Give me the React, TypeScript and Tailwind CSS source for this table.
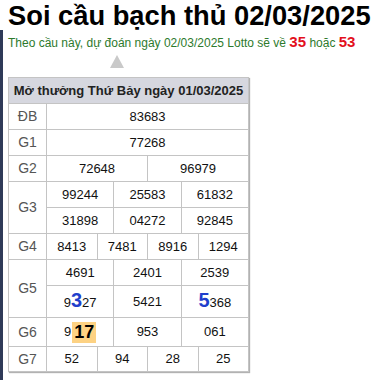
const font = { fontFamily: '"Liberation Sans", Arial, sans-serif' };

type Cell = { span: number; content: React.ReactNode };

function Row({ cells, h }: { cells: Cell[]; h: string }) {
  return (
    <>
      {cells.map((c, i) => (
        <div
          key={i}
          className={`flex items-center justify-center border-b border-r border-[#c4c4c4] text-[13px] text-[#111] ${h}`}
          style={{ gridColumn: `span ${c.span} / span ${c.span}` }}
        >
          {c.content}
        </div>
      ))}
    </>
  );
}

const n = (s: string, span: number): Cell => ({ span, content: s });

export default function App() {
  return (
    <div className="h-[380px] w-[381px] overflow-hidden bg-white" style={font}>
      <h1 className="h-[30px] whitespace-nowrap pl-[8px] pt-[2px] text-[27.3px] font-bold leading-none text-black">
        Soi cầu bạch thủ 02/03/2025
      </h1>
      <div className="flex min-h-[350px]">
        <div className="w-[3px] shrink-0 bg-[#2f3a58]" />
        <div className="pl-[5px]">
          <p className="h-[25px] whitespace-nowrap pt-[3px] text-[12px] leading-[17px] text-[#2d7a2d]">
            Theo cầu này, dự đoán ngày 02/03/2025 Lotto sẽ về{" "}
            <b className="text-[15px] text-[#e3101c]">35</b> hoặc{" "}
            <b className="text-[15px] text-[#e3101c]">53</b>
          </p>
          <div className="ml-[102px] h-0 w-0 border-x-[7px] border-b-[13px] border-x-transparent border-b-[#c9c9c9]" />
          <div className="mt-[9px] w-[241px] border-l border-t border-[#c4c4c4] shadow-[1px_1px_1px_rgba(0,0,0,0.3)]">
            <div className="flex h-[26px] items-center justify-center whitespace-nowrap border-b border-r border-[#c4c4c4] bg-[#d6d7df] text-[13px] font-bold text-[#222]">
              Mở thưởng Thứ Bảy ngày 01/03/2025
            </div>
            <div className="grid grid-cols-[38px_repeat(12,minmax(0,1fr))]">
              <Label h="h-[26px]">ĐB</Label>
              <Row h="h-[26px]" cells={[n("83683", 12)]} />
              <Label h="h-[26px]">G1</Label>
              <Row h="h-[26px]" cells={[n("77268", 12)]} />
              <Label h="h-[26px]">G2</Label>
              <Row h="h-[26px]" cells={[n("72648", 6), n("96979", 6)]} />
              <Label h="row-span-2">G3</Label>
              <Row h="h-[26px]" cells={[n("99244", 4), n("25583", 4), n("61832", 4)]} />
              <Row h="h-[26px]" cells={[n("31898", 4), n("04272", 4), n("92845", 4)]} />
              <Label h="h-[26px]">G4</Label>
              <Row h="h-[26px]" cells={[n("8413", 3), n("7481", 3), n("8916", 3), n("1294", 3)]} />
              <Label h="row-span-2">G5</Label>
              <Row h="h-[26px]" cells={[n("4691", 4), n("2401", 4), n("2539", 4)]} />
              <Row
                h="h-[32px]"
                cells={[
                  { span: 4, content: <span className="flex items-baseline">9<b className="text-[20px] leading-none text-[#1f3fcc]">3</b>27</span> },
                  n("5421", 4),
                  { span: 4, content: <span className="flex items-baseline"><b className="text-[20px] leading-none text-[#1f3fcc]">5</b>368</span> },
                ]}
              />
              <Label h="h-[29px]">G6</Label>
              <Row
                h="h-[29px]"
                cells={[
                  { span: 4, content: <span className="flex items-center">9<b className="ml-[1px] bg-[#fdd283] px-[2px] text-[18px] leading-[21px] text-black">17</b></span> },
                  n("953", 4),
                  n("061", 4),
                ]}
              />
              <Label h="h-[25px]">G7</Label>
              <Row h="h-[25px]" cells={[n("52", 3), n("94", 3), n("28", 3), n("25", 3)]} />
            </div>
          </div>
        </div>
      </div>
    </div>
  );
}

function Label({ children, h }: { children: React.ReactNode; h: string }) {
  return (
    <div className={`flex items-center justify-center border-b border-r border-[#c4c4c4] text-[14px] text-[#555] ${h}`}>
      {children}
    </div>
  );
}
